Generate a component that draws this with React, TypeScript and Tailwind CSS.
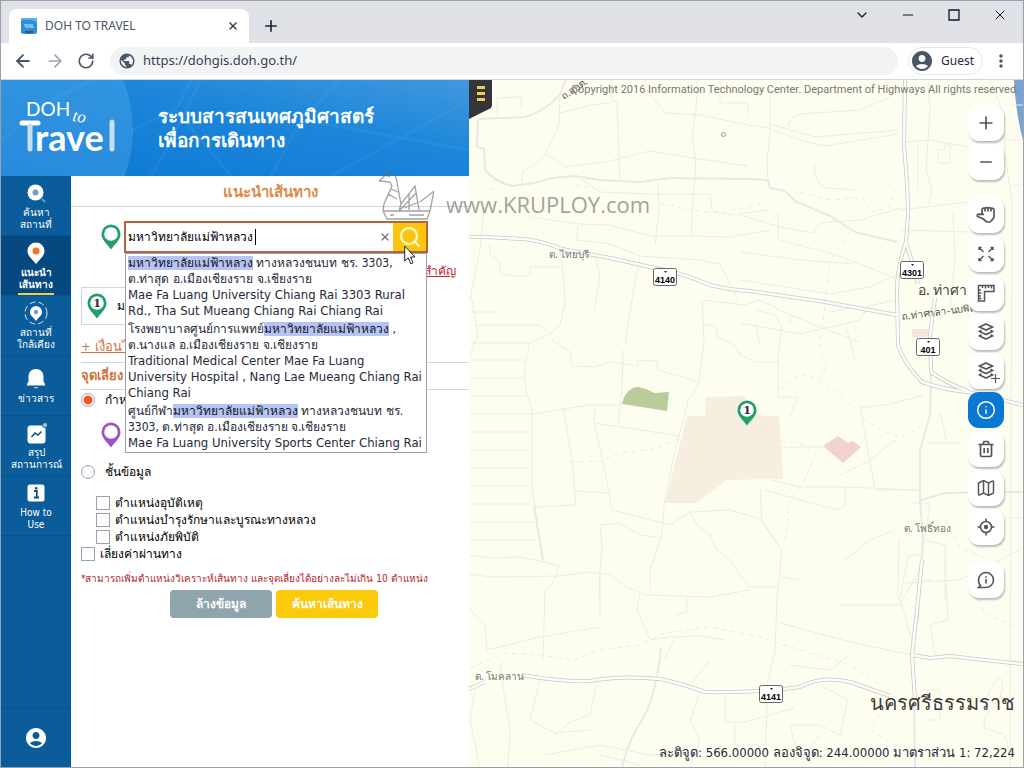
import type { FC, ReactNode } from "react";
import { clsx } from "clsx";
import {
    ArrowLeft,
    ArrowRight,
    ChevronDown,
    Info,
    Map as MapIcon,
    Minus,
    Plus,
    RotateCw,
    Search,
    X,
} from "lucide-react";
import { MdAccountCircle, MdMoreVert, MdPublic } from "react-icons/md";

interface NavItem {
    lines: string[];
    icon: ReactNode;
    active?: boolean;
}

interface Suggestion {
    before: string;
    after: string;
    thai: string;
    english: string[];
}

interface RouteShield {
    label: string;
    x: number;
    y: number;
}

const KEYWORD = "มหาวิทยาลัยแม่ฟ้าหลวง";

const suggestions: Suggestion[] = [
    {
        before: "",
        after: " ทางหลวงชนบท ชร. 3303,",
        thai: "ต.ท่าสุด อ.เมืองเชียงราย จ.เชียงราย",
        english: ["Mae Fa Luang University Chiang Rai 3303 Rural", "Rd., Tha Sut Mueang Chiang Rai Chiang Rai"],
    },
    {
        before: "โรงพยาบาลศูนย์การแพทย์",
        after: " ,",
        thai: "ต.นางแล อ.เมืองเชียงราย จ.เชียงราย",
        english: ["Traditional Medical Center Mae Fa Luang", "University Hospital , Nang Lae Mueang Chiang Rai", "Chiang Rai"],
    },
    {
        before: "ศูนย์กีฬา",
        after: " ทางหลวงชนบท ชร.",
        thai: "3303, ต.ท่าสุด อ.เมืองเชียงราย จ.เชียงราย",
        english: ["Mae Fa Luang University Sports Center Chiang Rai"],
    },
];

const layerOptions = ["ตำแหน่งอุบัติเหตุ", "ตำแหน่งบำรุงรักษาและบูรณะทางหลวง", "ตำแหน่งภัยพิบัติ"];

const shields: RouteShield[] = [
    { label: "4140", x: 665, y: 277 },
    { label: "4301", x: 912, y: 270 },
    { label: "401", x: 928, y: 347 },
    { label: "4141", x: 771, y: 694 },
];

const mainRoads = [
    "M469 237H485L525 239Q545 242 562 249L615 259 650 267Q680 272 710 285Q730 290 750 291L825 302 897 315",
    "M905 80L904 145Q908 190 908 215L906 242Q897 268 897 290L898 345Q903 362 922 382Q945 390 968 392L1023 405",
    "M906 242L912 262 918 284M935 298L930 335 931 372Q948 384 968 391",
    "M469 689L485 682M522 675Q560 682 590 681Q620 675 660 679Q680 683 705 692Q760 693 800 687Q822 675 850 682L890 696",
    "M912 655L930 658 950 656 975 659 1023 664M915 700L912 655 917 610 922 560",
];

const localRoads = [
    "M478 120L477 147 484 149 485 170Q495 182 512 186L535 183 552 178 575 176 600 180 640 182 670 178 748 179 768 180 770 188 785 191 795 201 830 216 855 232 897 242",
    "M478 119L525 117Q548 110 560 94L566 80",
    "M931 372L930 415 920 450 920 500 923 540 918 620M920 500L945 493 1023 492",
    "M914 700L915 767M661 648Q657 690 645 715Q628 740 622 767M534 506L543 560",
    "M560 94L559 124 546 154Q540 162 523 172L521 186M497 115V98L521 97V107M546 154L566 167 610 161 650 151 700 159 748 166",
    "M611 80L612 102 617 100 618 130 620 180M645 80L648 92 665 113 700 115 748 125 768 128 800 140 825 146 898 134",
    "M697 80L696 110 692 138 696 160 693 200 691 236M748 118V103H720V80M560 113L590 105 610 103",
    "M530 217L580 224 610 225 650 236 690 236 730 237 770 230M578 177L600 192 650 194 710 194 712 210 730 215 768 210",
    "M578 225L577 240 610 244 640 256 700 260 720 264 738 300M658 183L659 210 655 245",
    "M770 95V136L767 160 768 178M770 124L815 137 898 130M788 127Q790 116 800 114L860 110 890 97M815 163Q812 180 825 188L858 190",
    "M740 215L780 227 813 233 820 223 860 220 900 208M778 213V240L830 253 870 268 895 278M740 252L800 260 855 264",
    "M740 280L830 294 870 287 897 274M740 323L800 334 860 320 868 306 897 300",
    "M928 80L930 110 928 140 926 170 932 190 928 205M904 142L930 140 968 147M900 210L968 202M900 230L968 232M953 212L955 260 950 310M990 80L1004 115 1005 155 1012 200 1010 767",
    "M945 145V150H938V163H950V145ZM918 145V190M1010 105H1023M1007 140H1023M1012 185H1023",
    "M469 312H495M484 206L480 250 470 300M490 244V255L500 262V274L515 276H530V267H560M560 250L564 280 565 310M595 256L600 275 594 310M640 256L632 300 625 345",
    "M472 300L478 335 470 355M475 325H540L552 335M472 343H530L550 334 560 325 565 300M471 360H525M471 378H525M471 396H525M471 414H532L590 405 620 405",
    "M471 432H530M471 450H530M471 468H530M471 486H530M471 504H530M471 522H537M471 540H537",
    "M530 342Q522 370 526 390L532 410 532 490 536 510M552 340L570 352 572 366 595 367 610 362 638 366V360L657 361 658 370 700 382",
    "M623 350L622 390 618 425M702 300L704 340 700 375Q698 390 688 400L685 415 675 450 664 505 662 535 650 570 650 590",
    "M563 408L572 460 576 504 575 505 536 507M595 408L594 422 606 475 612 510 670 525 690 512 730 510 760 519 780 547M594 423L680 436M577 491L607 493",
    "M703 300L745 305 760 300 790 315 840 335 860 342M705 325H715L718 337 735 345 740 355 755 362H777L782 328 775 315 755 310",
    "M778 360V397H798L790 417M777 447H825M770 480L800 487 845 487V505L838 510 800 500 765 490M760 488L762 520 780 548",
    "M690 512L697 525 710 535 717 550 730 560 740 575 750 587 780 587M600 525L620 523 640 535 660 538M600 525L602 545 600 570 599 600",
    "M469 574L490 577 560 576 590 572 610 575 625 586 645 595 710 597 750 590M469 555L490 558 520 557 545 562 559 566 552 585 545 590 543 660",
    "M469 608L485 625 487 650M487 650L540 637 600 627M600 620V570M640 595L637 610 650 640 670 637 700 636 725 640M687 598V612L675 615",
    "M782 548L777 600 775 650 768 680 765 767M780 623L850 642 912 655M839 605H900L925 560M782 577L800 580M675 638L665 660",
    "M500 665L505 700 510 730 508 767M475 690L470 720 480 767M540 680L530 720 555 733 590 730M597 683L590 715 570 722 555 735",
    "M700 692L690 720 700 740 690 767M725 695V722H745L795 708M735 725V745H765M790 725H820L840 735 848 700 820 685M790 725L795 745",
    "M545 755L600 745 650 755 690 752M850 655L830 670 790 665M710 660L690 685M925 555H908L900 600 912 640M945 560L948 620 930 625 935 655",
    "M985 710Q988 685 1000 678 1007 690 995 705Q980 720 985 728L1005 735 1010 755M925 690H940V720H925M1000 560L960 580 905 583",
    "M840 475L870 460 895 440M860 405L875 490 918 490M845 487L918 490M860 408L890 404 925 395M925 443L960 443M940 412L947 443M895 530L870 540 845 560",
    "M899 540L898 600M912 503H930L925 540 945 545V600M855 360L850 340 845 325M755 322L760 345M790 317V325M850 308L830 312",
    "M968 582L1000 560 1023 548M800 760L820 735M600 755L640 765M915 580H932M1023 518H990",
];

const trails =
    "M570 462L600 461 620 453 655 449 680 438 720 435 760 440 800 443 815 455 805 480 790 500 785 540M780 390L800 374 815 378 840 395 855 408M820 335V352L827 365 820 380M490 190L500 186M575 185L600 190M660 203L690 210 720 213 760 204M470 668L505 653 540 655 575 660 600 650 640 645 665 633 710 627 760 637 800 650 850 665 880 685M800 192L830 200 862 197 870 212 890 208 895 190M862 418L880 430 900 437 925 425M945 520L960 548 990 560M975 590L985 615 1015 625M890 700L870 730 910 755M850 232L830 260 822 330";

const PinIcon: FC<{ color: string; label?: string }> = ({ color, label }) => (
    <svg viewBox="0 0 20 26" className="h-[26px] w-5 shrink-0">
        <path d="M10 0.5A9.500 9.500 0 0 0 .5 10C.5 16 6 20 10 25.500C14 20 19.500 16 19.500 10A9.500 9.500 0 0 0 10 .5Z" fill={color} />
        <circle cx="10" cy="10" r="6.800" fill="#fff" />
        {label && (
            <text x="10" y="14" textAnchor="middle" className="fill-gray-800 font-['DejaVu_Serif',serif] text-[11px] font-bold">
                {label}
            </text>
        )}
    </svg>
);

const navItems: NavItem[] = [
    {
        lines: ["ค้นหา", "สถานที่"],
        icon: (
            <svg viewBox="0 0 24 24" className="size-6">
                <circle cx="11.500" cy="11.500" r="8" fill="#fff" />
                <circle cx="11.500" cy="11.500" r="3" fill="#6f9fc6" />
                <path d="M18 18L21 21" stroke="#6f9fc6" strokeWidth="2" />
            </svg>
        ),
    },
    {
        lines: ["แนะนำ", "เส้นทาง"],
        active: true,
        icon: (
            <svg viewBox="0 0 24 24" className="size-6">
                <path d="M12 1.500A8.500 8.500 0 0 0 3.500 10C3.500 15 8 18 12 23C16 18 20.500 15 20.500 10A8.500 8.500 0 0 0 12 1.500Z" fill="#fff" />
                <circle cx="12" cy="10" r="3.500" fill="#ee7430" />
            </svg>
        ),
    },
    {
        lines: ["สถานที่", "ใกล้เคียง"],
        icon: (
            <svg viewBox="0 0 24 24" className="size-6">
                <circle cx="12" cy="12" r="11" fill="none" stroke="#d7e8f5" strokeDasharray="6 3" />
                <path d="M12 5A6 6 0 0 0 6 11C6 14.500 9.500 16.500 12 20C14.500 16.500 18 14.500 18 11A6 6 0 0 0 12 5Z" fill="#fff" />
                <circle cx="12" cy="11" r="2.200" fill="#6f9fc6" />
            </svg>
        ),
    },
    {
        lines: ["ข่าวสาร"],
        icon: (
            <svg viewBox="0 0 24 24" className="size-6">
                <path d="M12 2C6.500 2 4.500 6 4.500 10V14.500L3 17V18.500H21V17L19.500 14.500V10C19.500 6 17.500 2 12 2Z" fill="#fff" />
                <path d="M9.500 20H14.500Q12 23 9.500 20Z" fill="#a8c8e2" />
            </svg>
        ),
    },
    {
        lines: ["สรุป", "สถานการณ์"],
        icon: (
            <svg viewBox="0 0 24 24" className="size-6">
                <rect x="3.500" y="4.500" width="18" height="18" rx="3" fill="#fff" />
                <path d="M7.500 16L11 12 14 14 17.500 10.500" fill="none" stroke="#0d4f86" strokeWidth="1.500" />
                <circle cx="21" cy="4" r="2.500" fill="#a8c8e2" stroke="#0b5c9b" />
            </svg>
        ),
    },
    {
        lines: ["How to", "Use"],
        icon: (
            <svg viewBox="0 0 24 24" className="size-6">
                <rect x="3.500" y="3.500" width="17" height="17" rx="2.500" fill="#fff" />
                <path d="M10 10H12.800V16M9.800 16.500H15" fill="none" stroke="#174d78" strokeWidth="1.800" />
                <circle cx="12.200" cy="7.200" r="1.300" fill="#174d78" />
            </svg>
        ),
    },
];

const BrowserChrome: FC = () => (
    <header className="bg-[#dfe1e6]">
        <div className="flex h-[42px] items-start">
            <div className="mt-2 ml-2 flex h-[34px] w-60 items-center rounded-t-lg bg-white pr-[10px] pl-3">
                <svg viewBox="0 0 16 16" className="size-4">
                    <rect width="16" height="16" rx="2.500" fill="#2c8fdd" />
                    <path d="M0 3Q6 0 16 4V0H0Z" fill="#57b0ee" />
                    <path d="M3 7H12M4 9H13" stroke="#cfe8fa" />
                    <path d="M4 13H12V15H4Z" fill="#4a4f5c" />
                </svg>
                <span className="ml-2 flex-1 font-['Noto_Sans',sans-serif] text-xs text-gray-600">DOH TO TRAVEL</span>
                <button type="button" aria-label="Close tab" className="text-gray-700">
                    <X className="size-3" strokeWidth={3} />
                </button>
            </div>
            <button type="button" aria-label="New tab" className="mt-4 ml-[13px] text-gray-800">
                <Plus className="size-[18px]" strokeWidth={2.2} />
            </button>
            <div className="ml-auto flex items-center gap-[30px] pt-[6px] pr-[15px] text-gray-900">
                <ChevronDown className="size-4" strokeWidth={1.8} />
                <Minus className="size-4" strokeWidth={1.8} />
                <svg viewBox="0 0 16 16" className="size-4">
                    <path d="M3 3H13V13H3Z" fill="none" stroke="currentColor" strokeWidth="1.300" />
                </svg>
                <X className="size-4" strokeWidth={1.5} />
            </div>
        </div>
        <div className="flex h-[37px] items-center border-b border-gray-300 bg-white px-3">
            <button type="button" aria-label="Back" className="text-gray-600">
                <ArrowLeft className="size-5" strokeWidth={2.2} />
            </button>
            <button type="button" aria-label="Forward" className="ml-3 text-gray-400">
                <ArrowRight className="size-5" />
            </button>
            <button type="button" aria-label="Reload" className="ml-3 text-gray-600">
                <RotateCw className="size-[18px]" strokeWidth={2.2} />
            </button>
            <label className="ml-[15px] flex h-7 flex-1 items-center rounded-full bg-[#f1f3f4] px-2">
                <MdPublic className="size-[18px] text-gray-600" />
                <input
                    aria-label="Address"
                    defaultValue="https://dohgis.doh.go.th/"
                    className="ml-[7px] flex-1 bg-transparent font-['Noto_Sans',sans-serif] text-[13px] text-gray-700 outline-none"
                />
            </label>
            <button type="button" className="ml-[10px] flex h-7 items-center gap-[7px] rounded-full border border-gray-200 pr-2 pl-px">
                <MdAccountCircle className="size-[24px] text-gray-600" />
                <span className="font-['Noto_Sans',sans-serif] text-xs text-gray-800">Guest</span>
            </button>
            <button type="button" aria-label="Menu" className="ml-2 text-gray-600">
                <MdMoreVert className="size-5" />
            </button>
        </div>
    </header>
);

const Banner: FC = () => (
    <div className="relative flex h-24 items-center overflow-hidden bg-[#1a84d8]">
        <svg viewBox="0 0 468 96" preserveAspectRatio="xMinYMin slice" className="absolute inset-0 size-full">
            <defs>
                <linearGradient id="sky" x1="0" y1="1" x2="1" y2="0">
                    <stop offset="0" stopColor="#0d78d2" />
                    <stop offset="0.600" stopColor="#1b86da" />
                    <stop offset="1" stopColor="#4198de" />
                </linearGradient>
            </defs>
            <path d="M0 0H468V96H0Z" fill="url(#sky)" />
            <circle cx="2" cy="50" r="130" fill="#5db0ee" fillOpacity="0.350" />
            <path
                d="M190 0L175 30 130 50M175 30L230 96M150 96L165 70 200 0M270 96L300 40 340 0M300 40L468 70M330 96L468 20M0 60L50 20 90 0"
                fill="none"
                stroke="#6cb8f2"
                strokeOpacity="0.120"
                strokeWidth="3"
            />
        </svg>
        <svg viewBox="0 0 110 60" className="relative ml-4 h-[60px] w-[110px]" role="img" aria-label="DOH to Travel">
            <text x="9" y="18" className="fill-white font-[Lato,sans-serif] text-[19px]">
                DOH
            </text>
            <text x="0" y="0" transform="translate(55 23) rotate(8)" className="fill-white font-['Liberation_Serif',serif] text-[17px] italic">
                to
            </text>
            <path d="M5 25H21" stroke="#fff" strokeWidth="5" strokeLinecap="round" />
            <path d="M13 28V51M95 24V51" stroke="#c9dff0" strokeWidth="5" strokeLinecap="round" />
            <text x="18" y="53" className="fill-white font-[Lato,sans-serif] text-[36px] font-bold">
                rave
            </text>
        </svg>
        <h1 className="relative ml-[31px] font-['Noto_Sans',sans-serif] text-[19px] leading-6 font-semibold text-white">
            ระบบสารสนเทศภูมิศาสตร์
            <br />
            เพื่อการเดินทาง
        </h1>
    </div>
);

const Sidebar: FC = () => (
    <nav className="flex w-[70px] shrink-0 flex-col bg-[#0b5c9b] text-white">
        {navItems.map((item) => (
            <a
                key={item.lines[0]}
                href="#"
                className={clsx(
                    "relative flex h-[60px] flex-col items-center justify-center border-b border-[#0a528c] text-center text-[10px] leading-3",
                    item.active && "bg-[#064880] font-bold"
                )}
            >
                {item.icon}
                <span className="mt-[2px]">
                    {item.lines.map((line) => (
                        <span key={line} className="block">
                            {line}
                        </span>
                    ))}
                </span>
                {item.active && <span className="absolute bottom-0 h-[2px] w-9 bg-[#e9d24a]" />}
            </a>
        ))}
        <a href="#" aria-label="Account" className="mt-auto flex h-[60px] items-center justify-center border-t border-[#0a528c]">
            <MdAccountCircle className="size-6" />
        </a>
    </nav>
);

const SearchBox: FC = () => (
    <div className="relative flex-1">
        <div className="flex h-8 border-2 border-[#b5633f] bg-white">
            <input
                aria-label="สถานที่"
                defaultValue={KEYWORD}
                className="min-w-0 flex-1 px-[2px] text-xs text-black outline-none"
            />
            <button type="button" aria-label="ล้าง" className="px-[2px] text-gray-500">
                <X className="size-3" strokeWidth={2.5} />
            </button>
            <button type="button" aria-label="ค้นหา" className="flex w-[33px] items-center justify-center bg-[#fbc40d] text-[#fff3b8]">
                <Search className="size-6" strokeWidth={2.4} />
            </button>
        </div>
        <span className="absolute top-2 left-[131px] h-4 w-px bg-black" />
        <ul className="absolute inset-x-px top-8 z-10 flex flex-col gap-[2px] border border-gray-400 bg-white px-[2px] py-px text-[13px] leading-4 text-gray-800">
            {suggestions.map((item) => (
                <li key={item.thai} className="whitespace-nowrap">
                    <p className="text-xs leading-4">
                        {item.before}
                        <mark className="bg-[#b7c3f2] text-gray-900">{KEYWORD}</mark>
                        {item.after}
                    </p>
                    <p className="text-xs leading-4">{item.thai}</p>
                    {item.english.map((line) => (
                        <p key={line}>{line}</p>
                    ))}
                </li>
            ))}
        </ul>
        <svg viewBox="0 0 12 20" className="absolute top-6 right-3 z-20 h-5 w-3">
            <path d="M.7 1V16L4.200 12.800 6.700 18.800 9 17.800 6.600 12H11Z" fill="#fff" stroke="#222" />
        </svg>
    </div>
);

const RoutePanel: FC = () => (
    <main className="min-w-0 flex-1 bg-white text-xs text-black">
        <h2 className="border-b border-gray-300 pt-1 pb-[2px] text-center text-[15px] leading-6 font-bold text-[#e08a45]">แนะนำเส้นทาง</h2>
        <div className="flex items-center gap-[3px] pt-[14px] pr-[41px] pl-[30px]">
            <PinIcon color="#22a06b" />
            <SearchBox />
        </div>
        <div className="pt-[10px] pr-[13px] text-right text-[#c2242e]">
            <a href="#" className="underline">
                สำคัญ
            </a>
        </div>
        <div className="mt-2 mr-12 ml-[10px] flex h-[38px] items-center gap-[10px] border border-gray-300 pl-[5px]">
            <PinIcon color="#22a06b" label="1" />
            <span>ม</span>
        </div>
        <div className="ml-[10px] pt-3">
            <a href="#" className="text-[13px] leading-5 text-[#cf7440] underline">
                + เงื่อนไข
            </a>
            <h3 className="mt-[5px] border-y border-gray-300 py-1 text-[13px] leading-[18px] font-bold text-[#cf7440]">จุดเลี่ยง</h3>
            <label className="flex h-5 items-center gap-[10px]">
                <input
                    type="radio"
                    name="avoid"
                    defaultChecked
                    className="size-[14px] appearance-none rounded-full border border-gray-400 bg-white checked:bg-[radial-gradient(circle,#ea5a2c_4px,#fff_5px)]"
                />
                กำหนด
            </label>
            <div className="pt-3 pl-5">
                <PinIcon color="#a251c4" />
            </div>
            <label className="mt-2 flex h-8 items-center gap-[10px]">
                <input type="radio" name="avoid" className="size-[14px] appearance-none rounded-full border border-gray-400 bg-white" />
                ชั้นข้อมูล
            </label>
            <div className="pt-[6px] pl-[15px]">
                {layerOptions.map((option) => (
                    <label key={option} className="flex h-[17px] items-center gap-[5px]">
                        <input type="checkbox" className="size-[14px] appearance-none border border-gray-400 bg-white" />
                        {option}
                    </label>
                ))}
            </div>
            <label className="flex h-[18px] items-center gap-[5px]">
                <input type="checkbox" className="size-[14px] appearance-none border border-gray-400 bg-white" />
                เลี่ยงค่าผ่านทาง
            </label>
            <p className="pt-2 text-[10px] leading-4 text-[#b3242b]">
                *สามารถเพิ่มตำแหน่งวิเคราะห์เส้นทาง และจุดเลี่ยงได้อย่างละไม่เกิน 10 ตำแหน่ง
            </p>
        </div>
        <div className="flex justify-center gap-1 pt-[3px] pl-2 font-bold text-white">
            <button type="button" className="h-7 w-[102px] rounded bg-[#90a4ad]">
                ล้างข้อมูล
            </button>
            <button type="button" className="h-7 w-[102px] rounded bg-[#fbca0a]">
                ค้นหาเส้นทาง
            </button>
        </div>
    </main>
);

const MapCanvas: FC = () => (
    <svg viewBox="469 80 554 687" preserveAspectRatio="xMidYMid slice" className="absolute inset-0 size-full">
        <path d="M469 80H1023V767H469Z" fill="#fefef0" />
        <path d="M1014 80H1023V140Q1016 115 1014 80Z" fill="#7aa3d4" />
        <path d="M622 404Q626 387 639 387Q648 389 654 393L669 392 667 411Z" fill="#b9cc9a" />
        <path d="M706 397L745 396 748 404 762 416 779 416 783 479 727 480 697 503H665L687 416H705Z" fill="#f6eedf" />
        <path d="M838 436L848 443 853 441 861 447 843 463 823 446Z" fill="#f0d2d0" />
        <path d="M912 329H930V337H912Z" fill="#f5e5da" />
        <g fill="none" stroke="#ecece2">
            {localRoads.map((road, i) => (
                <path key={road} d={road} stroke={i < 4 ? "#e8e8e8" : "#ecece2"} strokeWidth={i < 4 ? 2 : 1} />
            ))}
            <path d={trails} strokeDasharray="5 4" />
        </g>
        <g fill="none" strokeLinejoin="round">
            {mainRoads.map((road) => (
                <path key={road} d={road} stroke="#c8c8cd" strokeWidth="4" />
            ))}
            {mainRoads.map((road) => (
                <path key={road} d={road} stroke="#fdfdf8" strokeWidth="2.500" />
            ))}
        </g>
        <circle cx="723.500" cy="134.500" r="2" fill="none" stroke="#999" />
        <g className="fill-[#777] font-['Noto_Sans',sans-serif] text-[10px]">
            <text x="549" y="258">ต. ไทยบุรี</text>
            <text x="475" y="680">ต. โมคลาน</text>
            <text x="904" y="532">ต. โพธิ์ทอง</text>
            <text x="902" y="320" transform="rotate(-7 902 320)" className="fill-[#555]">
                ถ.ท่าศาลา-นบพิตำ
            </text>
            <text x="564" y="100" transform="rotate(-35 564 100)" className="fill-[#555]">
                ถ.อุบต.
            </text>
            <text x="918" y="295" className="fill-[#444] text-[14px]">
                อ. ท่าศาลา
            </text>
            <text x="1015" y="710" textAnchor="end" className="fill-[#3c3c3c] text-[20px] font-medium">
                นครศรีธรรมราช
            </text>
        </g>
        {shields.map(({ label, x, y }) => (
            <g key={label}>
                <rect x={x - 11.5} y={y - 8.5} width="23" height="17" rx="2" fill="#fff" stroke="#666" />
                <path d={`M${x - 1} ${y - 6}h3l-1.500 2z`} fill="#222" />
                <text x={x} y={y + 6} textAnchor="middle" className="fill-black font-['Liberation_Sans',sans-serif] text-[9px] font-bold">
                    {label}
                </text>
            </g>
        ))}
        <svg x="737" y="400" width="20" height="26">
            <PinIcon color="#22a06b" label="1" />
        </svg>
    </svg>
);

const MapButton: FC<{ label: string; active?: boolean; children: ReactNode }> = ({ label, active, children }) => (
    <button
        type="button"
        aria-label={label}
        className={clsx(
            "flex size-9 items-center justify-center rounded-[11px]",
            active ? "bg-[#0a78d3] text-white" : "bg-white text-[#555] shadow-[1px_2px_2px_#bbb]"
        )}
    >
        {children}
    </button>
);

const LayersIcon: FC<{ plus?: boolean }> = ({ plus }) => (
    <svg viewBox="0 0 20 20" fill="none" stroke="currentColor" strokeWidth="1.600" className="size-5 overflow-visible">
        <path d="M10 2L16.500 5 10 8 3.500 5ZM5.500 8.300L3.500 9.500 10 12.500 16.500 9.500 14.500 8.300M5.500 12.800L3.500 14 10 17 16.500 14 14.500 12.800" />
        {plus && <path d="M15 17.500H24M19.500 13V22" strokeWidth="1.200" />}
    </svg>
);

const MapControls: FC = () => (
    <div className="absolute top-[25px] right-[19px] flex flex-col gap-[17px]">
        <div className="flex flex-col gap-[3px]">
            <MapButton label="Zoom in">
                <Plus className="size-5" />
            </MapButton>
            <MapButton label="Zoom out">
                <Minus className="size-[18px]" />
            </MapButton>
        </div>
        <div className="flex flex-col gap-[3px]">
            <MapButton label="Pan">
                <svg viewBox="0 0 20 20" fill="none" stroke="currentColor" strokeWidth="1.700" strokeLinejoin="round" className="size-5">
                    <path d="M6 9V4.500Q7 2.500 8.800 3.500Q10 2 11.600 3.200Q13 2 14.500 3.300Q18 2.500 18 5.500V12Q17.500 14 15.500 15.500L14 17H11L6.500 13.500 1.500 11.500Q.5 9.500 3 9.200L8 9.500M9 3.500V6.500M12 3.500V6.500M15 3.500V6.500" />
                </svg>
            </MapButton>
            <MapButton label="Full extent">
                <svg viewBox="0 0 20 20" fill="none" stroke="currentColor" strokeWidth="1.400" className="size-5">
                    <path d="M3 6V3.500H5.500M3 3.500L7.500 8M14.500 3.500H17V6M17 3.500L12.500 8M3 14V16.500H5.500M3 16.500L7.500 12M17 14V16.500H14.500M17 16.500L12.500 12" />
                </svg>
            </MapButton>
            <MapButton label="Measure">
                <svg viewBox="0 0 20 20" fill="none" stroke="currentColor" strokeWidth="1.500" className="size-5">
                    <path d="M2.500 2.500H18V8.500H8.500V18H2.500ZM6.500 3V5M9.500 3V5.500M12.500 3V5M15.500 3V5.500M3 7H5M3 10H5.500M3 13H5M3 15.500H5.500" />
                </svg>
            </MapButton>
            <MapButton label="Layers">
                <LayersIcon />
            </MapButton>
            <MapButton label="Add layer">
                <LayersIcon plus />
            </MapButton>
            <MapButton label="Identify" active>
                <Info className="size-5" strokeWidth={1.8} />
            </MapButton>
            <MapButton label="Clear">
                <svg viewBox="0 0 20 20" fill="none" stroke="currentColor" strokeWidth="1.700" strokeLinejoin="round" className="size-5">
                    <path d="M2.500 5.500H17.500M7 5.500L8 2.500H12L13 5.500M4.500 5.500V16Q4.500 17.500 6 17.500H14Q15.500 17.500 15.500 16V5.500M8.200 9V14M11.800 9V14" />
                </svg>
            </MapButton>
            <MapButton label="Basemap">
                <MapIcon className="size-5" strokeWidth={1.8} />
            </MapButton>
            <MapButton label="My location">
                <svg viewBox="0 0 20 20" fill="none" stroke="currentColor" strokeWidth="1.600" className="size-5">
                    <circle cx="10" cy="10" r="5.500" />
                    <circle cx="10" cy="10" r="2.200" fill="currentColor" stroke="none" />
                    <path d="M10 1.500V4.500M10 15.500V18.500M1.500 10H4.500M15.500 10H18.500" />
                </svg>
            </MapButton>
        </div>
        <MapButton label="About">
            <svg viewBox="0 0 20 20" fill="none" stroke="currentColor" strokeWidth="1.600" className="size-5">
                <path d="M2.500 17.500H10A7.500 7.500 0 1 0 2.500 10Q2.500 14 4.500 15.500ZM10 9V13.500M10 6.200V7.700" />
            </svg>
        </MapButton>
    </div>
);

const MapView: FC = () => (
    <section className="relative flex-1 overflow-hidden bg-[#fefef0]">
        <MapCanvas />
        <button type="button" aria-label="Toggle panel" className="absolute top-0 left-0">
            <svg viewBox="0 0 23 39" className="h-[39px] w-[23px]">
                <path d="M0 0H23V25Q23 28 20 29L0 39Z" fill="#34353a" />
                <path d="M8 7.500H16M8 13.500H16M8 19.500H16" stroke="#f2cc50" strokeWidth="3" />
            </svg>
        </button>
        <p className="absolute top-[2px] right-1 font-[Roboto,sans-serif] text-[11px] leading-4 whitespace-nowrap text-[#777]">
            Copyright 2016 Information Technology Center. Department of Highways All rights reserved.
        </p>
        <MapControls />
        <p className="absolute right-2 bottom-[6px] text-[13px] leading-4 whitespace-nowrap text-gray-800">
            ละติจูด: 566.00000 ลองจิจูด: 244.00000 มาตราส่วน 1: 72,224
        </p>
    </section>
);

const Watermark: FC = () => (
    <div className="pointer-events-none absolute top-[88px] left-[375px] z-30 flex items-end gap-3 opacity-60">
        <svg viewBox="0 0 58 52" fill="none" stroke="#666" strokeWidth="1.300" className="h-[52px] w-[58px]">
            <path d="M3 13L14 3 20 9 25 36 39 18 43 42M3 13L14 14 16 18 8 36 7 43 11 51H51L54 43H7M54 43L58 23 44 34M9 7L14 9M25 36L23 43 40 25M12 26L21 31M15 21L22 24M33 26V42M28 40L43 34M14 47H18M33 47H48" />
        </svg>
        <span className="font-['Open_Sans',sans-serif] text-[22px] leading-8 text-[#666]">www.KRUPLOY.com</span>
    </div>
);

export default function App() {
    return (
        <div className="flex min-h-screen flex-col border border-gray-400 bg-white font-['DejaVu_Sans_Condensed','DejaVu_Sans',sans-serif]">
            <BrowserChrome />
            <div className="relative flex flex-1">
                <div className="flex w-[468px] shrink-0 flex-col">
                    <Banner />
                    <div className="flex flex-1">
                        <Sidebar />
                        <RoutePanel />
                    </div>
                </div>
                <MapView />
                <Watermark />
            </div>
        </div>
    );
}
